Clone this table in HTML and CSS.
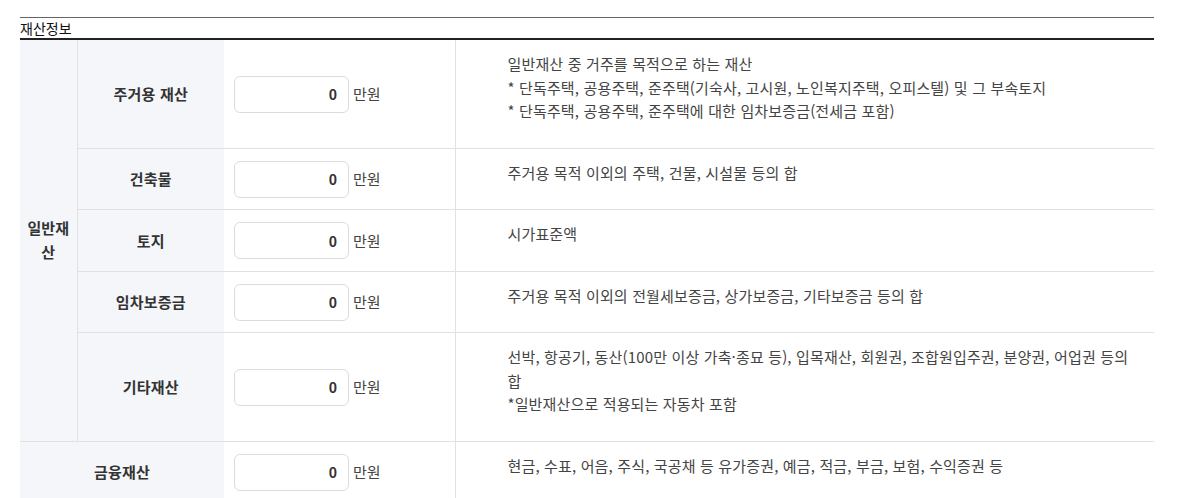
FILE: index.html
```html
<!DOCTYPE html>
<html lang="ko">
<head>
<meta charset="utf-8">
<link rel="stylesheet" href="styles.css">
</head>
<body>
<section class="asset">
  <h2 class="asset-title">재산정보</h2>
  <table class="asset-table">
    <colgroup>
      <col class="c-group">
      <col class="c-label">
      <col class="c-input">
      <col class="c-desc">
    </colgroup>
    <tbody>
      <tr>
        <th class="group" rowspan="5">일반재산</th>
        <th class="label">주거용 재산</th>
        <td class="field"><input class="amount" type="text" value="0"><span class="unit">만원</span></td>
        <td class="desc">일반재산 중 거주를 목적으로 하는 재산<br>* 단독주택, 공용주택, 준주택(기숙사, 고시원, 노인복지주택, 오피스텔) 및 그 부속토지<br>* 단독주택, 공용주택, 준주택에 대한 임차보증금(전세금 포함)</td>
      </tr>
      <tr>
        <th class="label">건축물</th>
        <td class="field"><input class="amount" type="text" value="0"><span class="unit">만원</span></td>
        <td class="desc">주거용 목적 이외의 주택, 건물, 시설물 등의 합</td>
      </tr>
      <tr>
        <th class="label">토지</th>
        <td class="field"><input class="amount" type="text" value="0"><span class="unit">만원</span></td>
        <td class="desc">시가표준액</td>
      </tr>
      <tr>
        <th class="label">임차보증금</th>
        <td class="field"><input class="amount" type="text" value="0"><span class="unit">만원</span></td>
        <td class="desc">주거용 목적 이외의 전월세보증금, 상가보증금, 기타보증금 등의 합</td>
      </tr>
      <tr>
        <th class="label">기타재산</th>
        <td class="field"><input class="amount" type="text" value="0"><span class="unit">만원</span></td>
        <td class="desc">선박, 항공기, 동산(100만 이상 가축·종묘 등), 입목재산, 회원권, 조합원입주권, 분양권, 어업권 등의 합<br>*일반재산으로 적용되는 자동차 포함</td>
      </tr>
      <tr>
        <th class="label wide" colspan="2">금융재산</th>
        <td class="field"><input class="amount" type="text" value="0"><span class="unit">만원</span></td>
        <td class="desc">현금, 수표, 어음, 주식, 국공채 등 유가증권, 예금, 적금, 부금, 보험, 수익증권 등</td>
      </tr>
    </tbody>
  </table>
</section>
</body>
</html>
```

FILE: styles.css
```css
* { box-sizing: border-box; }

body {
  margin: 0;
  background: #fff;
  font-family: "Noto Sans CJK KR", "Noto Sans", sans-serif;
  color: #333;
}

.asset {
  margin: 17px 0 0 20px;
  width: 1134px;
  border-top: 1px solid #666;
}

.asset-title {
  margin: 0;
  font-size: 14px;
  font-weight: 400;
  line-height: 20px;
  height: 20px;
  color: #111;
}

.asset-table {
  width: 1134px;
  table-layout: fixed;
  border-collapse: collapse;
  border-top: 2px solid #222;
}

.c-group { width: 57px; }
.c-label { width: 147px; }
.c-input { width: 231px; }
.c-desc { width: 699px; }

.asset-table th,
.asset-table td {
  border-bottom: 1px solid #e1e1e1;
  padding: 0;
}

.group {
  background: #f5f6fa;
  border-right: 1px solid #e1e1e1;
  font-size: 15px;
  font-weight: 700;
  line-height: 24px;
  color: #333;
  padding: 0 5px !important;
  text-align: center;
  vertical-align: middle;
}

.label {
  background: #f5f6fa;
  font-size: 15px;
  font-weight: 700;
  color: #333;
  text-align: center;
  vertical-align: middle;
  letter-spacing: 0.2px;
}

.field {
  padding: 12px 0 11px 10px !important;
  vertical-align: middle;
  border-right: 1px solid #e1e1e1;
  white-space: nowrap;
}

.amount {
  display: inline-block;
  vertical-align: middle;
  width: 115px;
  height: 37px;
  border: 1px solid #dcdcdc;
  border-radius: 6px;
  padding: 0 11px;
  text-align: right;
  font-family: "Noto Sans CJK KR", "Noto Sans", sans-serif;
  font-size: 14px;
  font-weight: 700;
  color: #333;
  background: #fff;
  outline: none;
}

.unit {
  display: inline-block;
  vertical-align: middle;
  margin-left: 4px;
  font-size: 15px;
  color: #444;
  line-height: 20px;
}

.desc {
  vertical-align: top;
  padding: 12px 20px 25px 52px !important;
  font-size: 15px;
  line-height: 23.5px;
  letter-spacing: 0.15px;
  color: #444;
}
```
